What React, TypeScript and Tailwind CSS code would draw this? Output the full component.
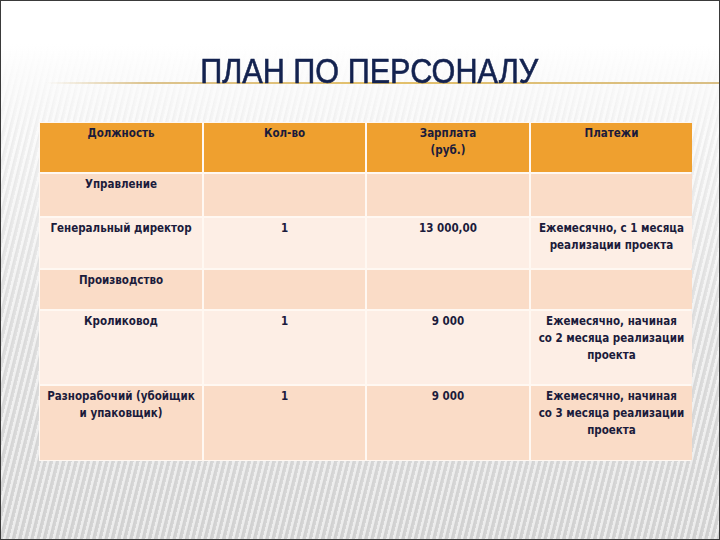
import React from "react";

const hdr = "bg-[#efa02f]";
const dark = "bg-[#fadcc7]";
const light = "bg-[#fdeee5]";

type Row = { h: string; bg: string; cells: React.ReactNode[] };

const rows: Row[] = [
  { h: "h-[49px]", bg: hdr, cells: ["Должность", "Кол-во", <>Зарплата<br />(руб.)</>, "Платежи"] },
  { h: "h-[42px]", bg: dark, cells: ["Управление", "", "", ""] },
  { h: "h-[50px]", bg: light, cells: ["Генеральный директор", "1", "13 000,00", <>Ежемесячно, с 1 месяца<br />реализации проекта</>] },
  { h: "h-[39px]", bg: dark, cells: ["Производство", "", "", ""] },
  { h: "h-[73px]", bg: light, cells: ["Кроликовод", "1", "9 000", <>Ежемесячно, начиная<br />со 2 месяца реализации<br />проекта</>] },
  { h: "h-[74px]", bg: dark, cells: [<>Разнорабочий (убойщик<br />и упаковщик)</>, "1", "9 000", <>Ежемесячно, начиная<br />со 3 месяца реализации<br />проекта</>] },
];

export default function App() {
  return (
    <div className="w-[720px] h-[540px] relative overflow-hidden border border-[#3a3a3a] bg-[linear-gradient(to_bottom,#ffffff_0%,#ffffff_8%,#f2f2f2_30%,#e2e2e2_60%,#d6d6d6_100%)]">
      <div className="absolute inset-0 bg-[repeating-linear-gradient(104deg,rgba(255,255,255,0.55)_0px,rgba(255,255,255,0.55)_2px,rgba(0,0,0,0.03)_3px,transparent_6px)] [mask-image:linear-gradient(to_bottom,transparent_0%,transparent_8%,black_25%,black_100%)]" />
      <div className="relative flex flex-col">
        <div className="pt-[52px] pl-[18px] flex justify-center">
          <div
            className="text-[35px] leading-none text-[#13224f] scale-x-[0.875] whitespace-nowrap [-webkit-text-stroke:0.6px_#13224f]"
            style={{ fontFamily: '"Liberation Sans", Arial, sans-serif' }}
          >
            ПЛАН ПО ПЕРСОНАЛУ
          </div>
        </div>
        <div className="ml-[45px] mt-[-6px] h-[2px] bg-[linear-gradient(to_right,rgba(220,190,120,0)_0%,#dcc38e_15%,#e3c06a_50%,#d9bf86_100%)]" />
        <div className="mt-[38px] ml-[38px] w-[652px] bg-[#fff8f2] p-[1px] flex flex-col gap-[2px]">
          {rows.map((r, i) => (
            <div key={i} className={`grid grid-cols-[162px_161px_162px_161px] gap-[2px] ${r.h}`}>
              {r.cells.map((c, j) => (
                <div
                  key={j}
                  className={`${r.bg} pt-[2px] text-center text-[11.5px] leading-[17px] font-bold text-[#1b1b3b] whitespace-nowrap`}
                  style={{ fontFamily: '"DejaVu Sans Condensed", "DejaVu Sans", sans-serif' }}
                >
                  {c}
                </div>
              ))}
            </div>
          ))}
        </div>
      </div>
    </div>
  );
}
